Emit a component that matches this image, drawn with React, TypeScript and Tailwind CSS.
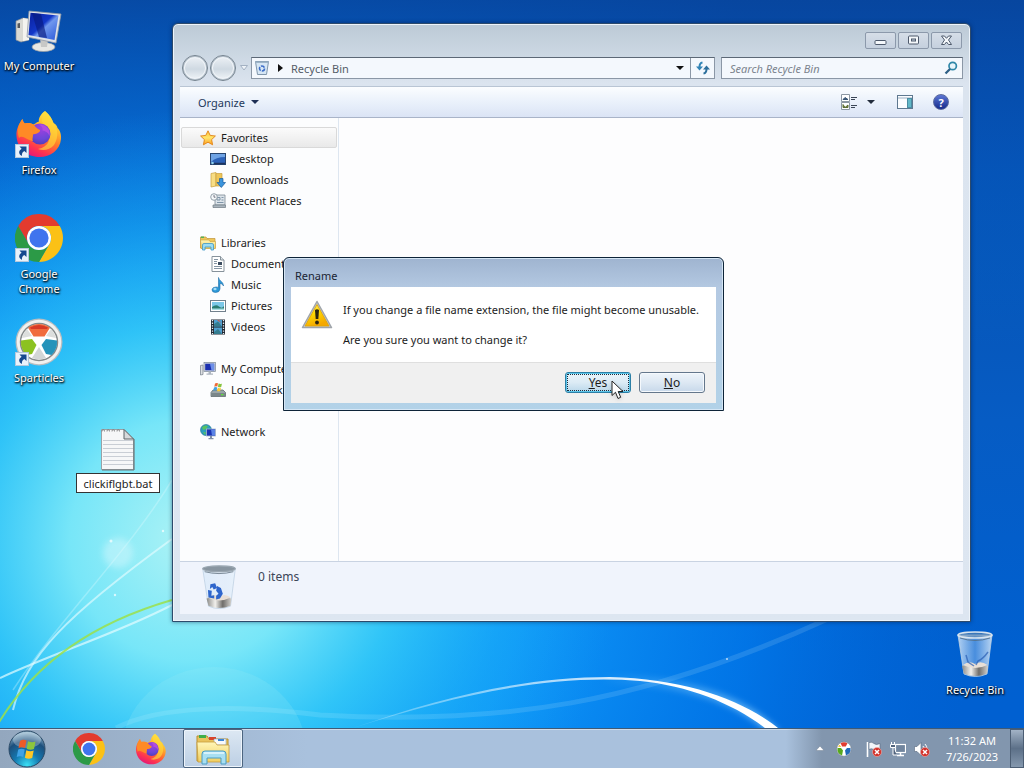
import { useState } from "react";
import type { ReactNode } from "react";

/* Shared gradients used by the icons */
function IconDefs() {
  return (
    <svg className="absolute h-0 w-0" aria-hidden="true">
      <defs>
        <linearGradient id="ffBody" x1="0.8" y1="0" x2="0.3" y2="1">
          <stop offset="0" stopColor="#fff44f" />
          <stop offset="0.3" stopColor="#ffc02e" />
          <stop offset="0.55" stopColor="#ff7a2b" />
          <stop offset="0.8" stopColor="#ff3350" />
          <stop offset="1" stopColor="#e0157c" />
        </linearGradient>
        <radialGradient id="ffGlobe" cx="0.55" cy="0.2" r="0.9">
          <stop offset="0" stopColor="#a23fe0" />
          <stop offset="0.6" stopColor="#6b47d8" />
          <stop offset="1" stopColor="#4a3ab0" />
        </radialGradient>
        <linearGradient id="screen" x1="0" y1="0" x2="1" y2="1">
          <stop offset="0" stopColor="#0a1f9c" />
          <stop offset="0.45" stopColor="#1237c8" />
          <stop offset="0.55" stopColor="#6f97ee" />
          <stop offset="1" stopColor="#2a57d8" />
        </linearGradient>
        <linearGradient id="glass" x1="0" y1="0" x2="1" y2="0">
          <stop offset="0" stopColor="#dcebfa" stopOpacity="0.8" />
          <stop offset="0.5" stopColor="#cfe3f7" stopOpacity="0.35" />
          <stop offset="1" stopColor="#e6f1fb" stopOpacity="0.8" />
        </linearGradient>
        <linearGradient id="metal" x1="0" y1="0" x2="1" y2="0">
          <stop offset="0" stopColor="#8a8a88" />
          <stop offset="0.35" stopColor="#f2f0ec" />
          <stop offset="0.65" stopColor="#6f6d6a" />
          <stop offset="1" stopColor="#d4d2ce" />
        </linearGradient>
        <linearGradient id="warn" x1="0" y1="0" x2="0.4" y2="1">
          <stop offset="0" stopColor="#fff27a" />
          <stop offset="0.5" stopColor="#ffd800" />
          <stop offset="1" stopColor="#f5a800" />
        </linearGradient>
        <linearGradient id="folder" x1="0" y1="0" x2="0" y2="1">
          <stop offset="0" stopColor="#fff6b8" />
          <stop offset="1" stopColor="#f0cf62" />
        </linearGradient>
        <radialGradient id="orb" cx="0.5" cy="0.95" r="0.9">
          <stop offset="0" stopColor="#3be0f5" />
          <stop offset="0.4" stopColor="#1478b0" />
          <stop offset="0.75" stopColor="#1d4f7c" />
          <stop offset="1" stopColor="#8fb4cc" />
        </radialGradient>
        <linearGradient id="star" x1="0" y1="0" x2="0" y2="1">
          <stop offset="0" stopColor="#ffc23a" />
          <stop offset="0.5" stopColor="#ffe56a" />
          <stop offset="1" stopColor="#ff9d1e" />
        </linearGradient>
      </defs>
    </svg>
  );
}

function ChromeIcon({ className }: { className: string }) {
  return (
    <svg viewBox="0 0 48 48" className={className}>
      <path d="M24 12H44.78A24 24 0 0 0 3.2 12L13.6 30A12 12 0 0 1 24 12Z" fill="#e33b2e" />
      <path d="M44.78 12A24 24 0 0 1 24 48L34.4 30A12 12 0 0 0 24 12Z" fill="#fbc116" />
      <path d="M3.2 12A24 24 0 0 0 24 48L34.4 30A12 12 0 0 1 13.6 30Z" fill="#2c9a47" />
      <circle cx="24" cy="24" r="12" fill="#fff" />
      <circle cx="24" cy="24" r="9.6" fill="#3f74ee" />
    </svg>
  );
}

function FirefoxIcon({ className }: { className: string }) {
  return (
    <svg viewBox="0 0 48 48" className={className}>
      <path
        d="M30 1C35 5 37 9 38.5 13C41 14 42 16 42.5 18C45 20 46.5 25 46 29C45 40 35.5 47 24.5 47C12 47 2 38 1.5 26C1 20 3.500 15 5.500 12C6 10.500 7 9.500 7.500 9C7.500 11 8.500 12.500 9.500 13.500C13 12.500 16 13 18.500 14.500C20.500 13.500 22 12 24 11.500C23 9 26 3.500 30 1Z"
        fill="url(#ffBody)"
      />
      <path d="M30 1C35 5 37 9 38.5 13C43 19 44 27 39 35C35 40 28 41 23 39C34 37 37 28 32 20C28 14 24 10 30 1Z" fill="#ffd83a" opacity="0.65" />
      <circle cx="25" cy="24" r="10.5" fill="url(#ffGlobe)" />
      <path d="M5.5 12L7.5 9C8 11 9 12.5 10 13.5C14 12.5 17 13.5 19 15C21 18 24 19.5 25 20C25.5 23 20 24 18 24.5C18 28 17 29 18 31C12 30 7 24 4 28C2 22 3 16 5.5 12Z" fill="#ff8a26" />
      <path d="M24 14.5C30 13.5 36 19 34.5 26C33 22 30 21 27.5 20.5C28 18 27 16 24 14.5Z" fill="#b24ce0" />
    </svg>
  );
}

function SparticlesIcon({ className }: { className: string }) {
  return (
    <svg viewBox="0 0 48 48" className={className}>
      <circle cx="24" cy="24" r="23.5" fill="#b9bdc0" />
      <circle cx="24" cy="24" r="22.2" fill="#f1f1ef" />
      <circle cx="24" cy="24" r="18.5" fill="#fff" stroke="#85898a" strokeWidth="1.5" />
      <path d="M13 9.8A18 18 0 0 1 35 9.800L29.500 18.500H18.500Z" fill="#f06c3e" />
      <path d="M15 9.500A18 18 0 0 1 33 9.500L32 11H16Z" fill="#d83a26" />
      <path d="M6 22.500L17 21L21.500 27L17 36L11.500 37A18 18 0 0 1 6 22.500Z" fill="#8cc220" />
      <path d="M42 22.500L31 21L26.500 27L31 36L36.500 37A18 18 0 0 0 42 22.500Z" fill="#2593ba" />
      <path d="M7 20A18 18 0 0 1 12 11L17 18Z" fill="#dcdedd" />
      <path d="M41 20A18 18 0 0 0 36 11L31 18Z" fill="#dcdedd" />
      <path d="M17 40A18 18 0 0 0 31 40L24 29Z" fill="#d3d6d6" />
    </svg>
  );
}

function ComputerIcon({ className }: { className: string }) {
  return (
    <svg viewBox="0 0 48 48" className={className}>
      <path d="M1 15L8 12L14 13V34L6 36L1 34Z" fill="#d9d9d4" stroke="#8a8e92" strokeWidth="0.7" />
      <path d="M2.5 17.5L5 17V22L2.5 22Z" fill="#55585c" />
      <path d="M8 12L14 13V34L8 35Z" fill="#f4f3ef" />
      <ellipse cx="28.5" cy="41" rx="11.5" ry="4.5" fill="#e8e8e4" stroke="#9c9e9f" strokeWidth="0.7" />
      <path d="M25 32L33 33L32 41H26Z" fill="#c7c8c6" />
      <path d="M14 5L46 8L41 37L12 31Z" fill="#dfe3e8" stroke="#8f98a6" strokeWidth="0.8" />
      <path d="M15.5 6.8L43.5 9.5L39.5 34L13.5 29Z" fill="url(#screen)" />
      <path d="M17 7L26 8L32 32L24 31Z" fill="#071a80" opacity="0.65" />
    </svg>
  );
}

function BinIcon({ className, full }: { className: string; full?: boolean }) {
  return (
    <svg viewBox="0 0 48 48" className={className}>
      <path d="M7 5L13 44Q24 49 36 44L41 5Z" fill="url(#glass)" stroke="#bdd0e2" strokeWidth="0.8" />
      <path d="M11 36Q24 32 37 36L36 43.5Q24 48.5 13 43.5Z" fill="url(#metal)" />
      <path d="M12 35Q18 30 24 34Q30 30 36.5 35Q24 41 12 35Z" fill="#e8dfd6" />
      <ellipse cx="24" cy="5" rx="17" ry="3" fill="#6f8ea8" fillOpacity="0.5" stroke="#d8e4ee" strokeWidth="1.6" />
      {full ? (
        <>
          <ellipse cx="24" cy="5" rx="17" ry="3" fill="#8895a0" stroke="#9aa6b0" strokeWidth="1.2" />
          <path d="M9 8Q24 12 39 8" stroke="#6b7a88" strokeWidth="0.9" fill="none" />
          <g fill="#2f66cc">
            <path d="M15 21L20 20L22 25L18.5 26.5L17 24L14.5 26Z" />
            <path d="M12.5 27L16.5 28L16 33L19 32.5V36L13 35Z" />
            <path d="M22 23L26 25L28 31L25 36L21 37V33L23.500 31L21 28Z" />
          </g>
        </>
      ) : (
        <>
          <path d="M9 8Q24 13 39 8" stroke="#54718a" strokeWidth="0.9" fill="none" />
          <g stroke="#2b5fb4" strokeWidth="1.5" fill="none" opacity="0.7">
            <path d="M15 25L17 32L23 36" />
            <path d="M37 22Q32 29 27 31L25 35" />
          </g>
        </>
      )}
    </svg>
  );
}

function ShortcutArrow() {
  return (
    <svg viewBox="0 0 14 14" className="absolute bottom-0 left-0 size-3.5">
      <rect width="14" height="14" fill="#e9f2fb" />
      <rect x="0.5" y="0.5" width="13" height="13" fill="none" stroke="#b4c8dc" />
      <path d="M4.5 2.5H11.5V9L9.3 7C7.3 8.2 6.7 9.8 7 12C3.4 10 3.2 7 6.6 4.7Z" fill="#16498f" />
    </svg>
  );
}

function NotepadIcon({ className }: { className: string }) {
  return (
    <svg viewBox="0 0 48 48" className={className}>
      <path d="M7.500 6.500H30L39.500 16V46.500H7.500Z" fill="#f6f7f8" stroke="#9aa1a6" />
      <path d="M8 47H40M40 16V47" stroke="#6d7678" strokeWidth="1.2" />
      <path d="M9 17.500H39M9 21.500H39M9 25.500H39M9 29.500H39M9 33.500H39M9 37.500H39M9 41.500H39" stroke="#c9ced5" />
      <path d="M30 6.500V16H39.500Z" fill="#d7dadc" stroke="#5c6468" />
      <path d="M8 8.500a1.300 1.300 0 1 1 2.500 0M13 8.500a1.300 1.300 0 1 1 2.500 0M18 8.500a1.300 1.300 0 1 1 2.500 0M23 8.500a1.300 1.300 0 1 1 2.500 0" stroke="#777" strokeWidth="0.8" fill="none" />
    </svg>
  );
}

function FolderIcon({ className }: { className: string }) {
  return (
    <svg viewBox="0 0 36 32" className={className}>
      <path d="M2 3H12L14 6H33V28H2Z" fill="#e9c35c" stroke="#b98f2f" />
      <rect x="4" y="2" width="7" height="3" fill="#3fae49" />
      <rect x="14" y="4" width="7" height="3" fill="#d8442c" />
      <path d="M19 6H31V12H19Z" fill="#f9fafb" stroke="#8fa9c4" strokeWidth="0.6" />
      <rect x="23" y="6" width="6" height="2" fill="#3d86d6" />
      <path d="M2 9H20L22 12H34V29H3Z" fill="url(#folder)" stroke="#c79d3d" strokeWidth="0.8" />
      <path d="M7 31V21Q7 18 10 18H28Q31 18 31 21V31H26V25H12V31Z" fill="#a8dff2" stroke="#4a9cc4" />
      <path d="M9 20H29" stroke="#e6f8ff" strokeWidth="1.5" />
    </svg>
  );
}

/* Navigation pane icons, all drawn on a 16 grid */
const navIcons: Record<string, ReactNode> = {
  favorites: (
    <path d="M8 0.8L10.2 5.4L15.4 6L11.6 9.6L12.6 14.8L8 12.2L3.4 14.8L4.4 9.6L0.6 6L5.8 5.4Z" fill="url(#star)" stroke="#e08214" strokeWidth="0.9" />
  ),
  desktop: (
    <>
      <rect x="0.5" y="2.5" width="15" height="11" fill="#2c62b8" stroke="#27456f" />
      <path d="M1 3H15V6Q6 6 1 11Z" fill="#6fa3e4" />
      <path d="M1 12.5H15" stroke="#1d3460" strokeWidth="1.5" />
      <circle cx="2.5" cy="12" r="1.3" fill="#8fd0ef" />
    </>
  ),
  downloads: (
    <>
      <path d="M1 1.5L6 0.5V14L1 15Z" fill="#f7dd84" stroke="#c79d3d" strokeWidth="0.7" />
      <path d="M6 1.5H12V14H6Z" fill="#eec659" stroke="#c79d3d" strokeWidth="0.7" />
      <path d="M9.5 6.5H13V10.5H15.5L11.3 15.5L7 10.5H9.5Z" fill="#3b94dc" stroke="#1a5c9c" strokeWidth="0.7" />
    </>
  ),
  recent: (
    <>
      <path d="M5 2H15V12H5Z" fill="#dde4ea" stroke="#7c8994" strokeWidth="0.8" />
      <path d="M7 4.5H10V7H7ZM11.5 4.5H13.5M11.5 7H13.5M7 9.5H13.5" stroke="#7f95a8" fill="none" />
      <path d="M3 12H15.5V14.5H3Z" fill="#aab5be" stroke="#6d7982" strokeWidth="0.7" />
      <circle cx="4" cy="4" r="3.3" fill="#f5f8fa" stroke="#8a97a2" strokeWidth="0.9" />
      <path d="M4 2V4.2H5.5" stroke="#445" strokeWidth="0.7" fill="none" />
    </>
  ),
  libraries: (
    <>
      <path d="M0.5 2H6L7 3.5H15V13H0.5Z" fill="#eec659" stroke="#c09338" strokeWidth="0.7" />
      <path d="M1 1.5H4V3H1Z" fill="#57b155" />
      <path d="M0.5 5H9L10 6.5H15.5V13.5H1Z" fill="url(#folder)" stroke="#c79d3d" strokeWidth="0.6" />
      <path d="M2.5 15V10Q2.5 8.5 4 8.5H12Q13.5 8.5 13.5 10V15H11V12H5V15Z" fill="#9adcf4" stroke="#3f97c6" strokeWidth="0.8" />
    </>
  ),
  documents: (
    <>
      <path d="M2 0.5H10.5L14 4V15.5H2Z" fill="#fff" stroke="#87929b" />
      <path d="M10.5 0.5V4H14" fill="#dde3e8" stroke="#87929b" />
      <path d="M4 3.5H8M4 5.5H7M4 7.5H7M4 10.5H12M4 12.5H12" stroke="#8696a4" />
      <rect x="8" y="6" width="4" height="3" fill="#3c4d60" />
    </>
  ),
  music: (
    <>
      <path d="M8.5 0.5C9 4 13.5 4.5 13.5 9C13 7.5 11.5 6.5 10 6.5V12Q9.5 15.5 5.5 15.5Q2 15.5 2 12.8Q2.5 10 6 10Q7.5 10 8.500 10.500Z" fill="#2e9ad8" stroke="#1b6ca8" strokeWidth="0.6" />
      <ellipse cx="5" cy="12" rx="1.6" ry="1.2" fill="#a5dcf6" />
    </>
  ),
  pictures: (
    <>
      <rect x="0.5" y="2.5" width="15" height="11" fill="#fff" stroke="#71808c" />
      <rect x="2" y="4" width="12" height="8" fill="#7cc8e8" />
      <path d="M2 9Q6 6 9 8.5T14 8V12H2Z" fill="#2a7d72" />
      <path d="M2 10.5H14V12H2Z" fill="#a9dfe4" />
    </>
  ),
  videos: (
    <>
      <rect x="1" y="0.5" width="14" height="15" fill="#1f2630" />
      <rect x="4" y="1" width="8" height="6.5" fill="#4f9fd0" />
      <rect x="4" y="8.5" width="8" height="6.5" fill="#4f9fd0" />
      <path d="M4 5L8 2.5L12 7.5H4ZM4 13L8 10L12 15H4Z" fill="#347c8f" />
      <path d="M7 1L9 1L11 4Z" fill="#d05a4e" />
      <path d="M2.5 1V15M13.5 1V15" stroke="#e6edf3" strokeWidth="1.3" strokeDasharray="1.3 1.3" />
    </>
  ),
  computer: (
    <>
      <path d="M0.5 4.5L3 4V13.5L0.5 14Z" fill="#dcdfe2" stroke="#747d88" strokeWidth="0.7" />
      <rect x="4" y="1.5" width="11.5" height="9" fill="#cfd6e0" stroke="#7a8698" strokeWidth="0.7" />
      <rect x="5.2" y="2.7" width="9" height="6.6" fill="#1a2fb0" />
      <path d="M10 2.7H14.2V9.3H11.5Z" fill="#6d8fe8" />
      <path d="M8.5 10.5H11V12.5H13V13.8H6.5V12.5H8.5Z" fill="#aeb6c0" />
    </>
  ),
  disk: (
    <>
      <path d="M1 10.5L3 8H13L15.5 10.5V14.5H1Z" fill="#9aa5a8" stroke="#525e62" strokeWidth="0.7" />
      <rect x="1.5" y="11" width="13.5" height="3" fill="#7b878a" />
      <rect x="11" y="12" width="2.5" height="1.3" fill="#5fe03c" />
      <path d="M5 1.500Q6.500 0.500 8 1.300L7.300 4.600Q5.800 4 4.300 4.800Z" fill="#ee6a35" />
      <path d="M8.600 1.600Q10.500 2.500 12 1.500L11.200 5Q9.500 5.800 7.900 4.800Z" fill="#86c440" />
      <path d="M4 5.400Q5.600 4.800 7.200 5.400L6.500 8.600Q5 8 3.300 8.700Z" fill="#3fa0e0" />
      <path d="M7.800 5.700Q9.500 6.500 11 5.800L10.200 9Q8.800 9.700 7 8.900Z" fill="#fbcb35" />
    </>
  ),
  network: (
    <>
      <circle cx="6" cy="6" r="5.5" fill="#2c9fbc" stroke="#1f6d96" strokeWidth="0.6" />
      <path d="M2 3Q5 0.5 8 2L6 5L3 6ZM3 8L6 8.5L5 11Z" fill="#59c262" />
      <rect x="6.5" y="5" width="9" height="7" fill="#1a33b4" stroke="#a9b8cc" strokeWidth="0.8" />
      <path d="M11 5.5H15V11.5H12Z" fill="#5a83e6" />
      <path d="M10 12H12V14H13.5V15.3H8.5V14H10Z" fill="#7f8ea6" />
    </>
  ),
};

const navGroups = [
  {
    label: "Favorites",
    icon: "favorites",
    items: [
      { label: "Desktop", icon: "desktop" },
      { label: "Downloads", icon: "downloads" },
      { label: "Recent Places", icon: "recent" },
    ],
  },
  {
    label: "Libraries",
    icon: "libraries",
    items: [
      { label: "Documents", icon: "documents" },
      { label: "Music", icon: "music" },
      { label: "Pictures", icon: "pictures" },
      { label: "Videos", icon: "videos" },
    ],
  },
  {
    label: "My Computer",
    icon: "computer",
    items: [{ label: "Local Disk (C:)", icon: "disk" }],
  },
  { label: "Network", icon: "network", items: [] },
];

function NavIcon({ name }: { name: string }) {
  return (
    <svg viewBox="0 0 16 16" className="size-4 shrink-0">
      {navIcons[name]}
    </svg>
  );
}

function Wallpaper() {
  return (
    <svg viewBox="0 0 1024 768" preserveAspectRatio="none" className="absolute inset-0 h-full w-full" aria-hidden="true">
      <defs>
        <linearGradient id="sky" x1="0" y1="0" x2="0" y2="1">
          <stop offset="0" stopColor="#08459f" />
          <stop offset="0.25" stopColor="#0652b2" />
          <stop offset="0.55" stopColor="#065cc4" />
          <stop offset="0.85" stopColor="#0060d0" />
          <stop offset="1" stopColor="#0060d2" />
        </linearGradient>
        <radialGradient id="glowBlue" gradientUnits="userSpaceOnUse" cx="220" cy="560" r="760">
          <stop offset="0" stopColor="#22bbff" />
          <stop offset="0.4" stopColor="#109cfb" stopOpacity="0.95" />
          <stop offset="0.7" stopColor="#0280f2" stopOpacity="0.65" />
          <stop offset="1" stopColor="#0068dc" stopOpacity="0" />
        </radialGradient>
        <radialGradient id="glowCyan" gradientUnits="userSpaceOnUse" cx="190" cy="540" r="430">
          <stop offset="0" stopColor="#aef3f5" />
          <stop offset="0.28" stopColor="#7ce9f8" stopOpacity="0.95" />
          <stop offset="0.5" stopColor="#36ccf7" stopOpacity="0.8" />
          <stop offset="0.75" stopColor="#1cb0f4" stopOpacity="0.4" />
          <stop offset="1" stopColor="#16a0f4" stopOpacity="0" />
        </radialGradient>
        <linearGradient id="topShade" x1="0" y1="0" x2="0" y2="1">
          <stop offset="0" stopColor="#07469f" stopOpacity="0.85" />
          <stop offset="0.22" stopColor="#0458c0" stopOpacity="0.5" />
          <stop offset="0.45" stopColor="#0468d0" stopOpacity="0" />
        </linearGradient>
        <linearGradient id="arc" x1="0" y1="0" x2="1" y2="0">
          <stop offset="0" stopColor="#fff" stopOpacity="0.2" />
          <stop offset="0.5" stopColor="#fff" stopOpacity="0.7" />
          <stop offset="0.75" stopColor="#fff" />
        </linearGradient>
        <linearGradient id="arcGlow" gradientUnits="userSpaceOnUse" x1="600" y1="0" x2="780" y2="0">
          <stop offset="0" stopColor="#9fdcff" stopOpacity="0" />
          <stop offset="1" stopColor="#9fdcff" stopOpacity="0.7" />
        </linearGradient>
        <filter id="soft" x="-30%" y="-50%" width="160%" height="200%">
          <feGaussianBlur stdDeviation="3" />
        </filter>
      </defs>
      <rect width="1024" height="768" fill="url(#sky)" />
      <rect width="1024" height="768" fill="url(#glowBlue)" />
      <rect width="1024" height="768" fill="url(#topShade)" />
      <rect width="1024" height="768" fill="url(#glowCyan)" />
      <ellipse cx="214" cy="755" rx="93" ry="88" fill="#9ff0f6" opacity="0.18" />
      <circle cx="118" cy="553" r="15" fill="#e6fbff" opacity="0.4" filter="url(#soft)" />
      <g fill="none" stroke="#e4fcff">
        <path d="M13 710C26 656 66 616 172 539" strokeWidth="2" opacity="0.65" />
        <path d="M13 690C60 618 130 550 172 480" strokeWidth="1.5" opacity="0.3" />
        <path d="M0 678C56 652 116 634 172 605" strokeWidth="2" opacity="0.7" />
        <path d="M116 728C160 705 240 705 320 715C500 725 640 705 830 618" strokeWidth="5" opacity="0.13" />
      </g>
      <path d="M-2 724C36 660 96 622 172 600" fill="none" stroke="#9be04a" strokeWidth="2" opacity="0.85" />
      <path d="M600 679C690 680 745 702 776 734" fill="none" stroke="url(#arcGlow)" strokeWidth="9" filter="url(#soft)" />
      <path d="M353 728C450 694 530 677 610 677C690 679 747 702 782 731L769 731C735 704 690 686 640 681C550 674 460 694 353 728Z" fill="url(#arc)" />
      <g fill="#fff" opacity="0.7">
        <circle cx="111" cy="541" r="1.5" />
        <circle cx="163" cy="531" r="1.2" />
        <circle cx="115" cy="595" r="1.2" />
        <circle cx="727" cy="659" r="1" />
      </g>
    </svg>
  );
}

function DesktopIcon({ label, shortcut, children }: { label: string; shortcut?: boolean; children: ReactNode }) {
  return (
    <button className="flex min-h-[104px] w-full flex-col items-center gap-1 text-center text-white [text-shadow:1px_1px_2px_#000,0_1px_2px_#000]">
      <span className="relative size-12">
        {children}
        {shortcut && <ShortcutArrow />}
      </span>
      <span className="whitespace-pre">{label}</span>
    </button>
  );
}

function Caption({ label, children }: { label: string; children: ReactNode }) {
  return (
    <button
      aria-label={label}
      className="flex h-[17px] w-[31px] items-center justify-center rounded-xs border border-[#8c99ab] bg-linear-to-b from-[#d6dee8] to-[#c5d0de]"
    >
      <svg viewBox="0 0 13 11" className="h-[11px] w-[13px]">
        {children}
      </svg>
    </button>
  );
}

function TravelButton({ label }: { label: string }) {
  return (
    <button
      aria-label={label}
      className="size-[26px] rounded-full border border-[#75838f] bg-linear-to-b from-[#eef2f6] via-[#cfd9e2] via-55% to-[#f2f6f9] shadow-[inset_0_0_0_1px_#b4c0cb,inset_0_0_0_2px_#f0f4f8]"
    />
  );
}

function ExplorerWindow() {
  const [query, setQuery] = useState("");

  return (
    <section className="absolute top-[23px] right-[53px] bottom-[106px] left-[172px] flex flex-col rounded-t-md border border-[#2d4a6b] bg-linear-to-b from-[#bccad6] via-[#dbe4ef] via-10% to-[#dde6f1] px-[7px] pb-[7px] shadow-[inset_0_0_0_1px_#eef4fa,0_0_4px_rgba(0,20,60,0.5)]">
      <div className="flex h-8 items-start justify-end gap-0.5 pt-2 pr-px">
        <Caption label="Minimize">
          <rect x="1" y="5.5" width="11" height="4" rx="1" fill="#f5f8fb" stroke="#4d596b" />
        </Caption>
        <Caption label="Maximize">
          <rect x="1.5" y="1" width="10" height="8" rx="1" fill="#f5f8fb" stroke="#4d596b" />
          <rect x="4.5" y="4" width="4" height="2" fill="#c8d2df" stroke="#4d596b" />
        </Caption>
        <Caption label="Close">
          <path d="M1.5 1H4.5L6.5 3.3L8.5 1H11.5L8.5 5L11.5 9.5H8.5L6.5 7L4.5 9.5H1.5L4.5 5Z" fill="#f5f8fb" stroke="#4d596b" />
        </Caption>
      </div>

      {/* Address row */}
      <div className="flex h-[30px] items-center pb-1.5">
        <div className="flex w-[71px] shrink-0 items-center gap-0.5 pl-0.5">
          <TravelButton label="Back" />
          <TravelButton label="Forward" />
          <svg viewBox="0 0 8 6" className="ml-0.5 h-1.5 w-2">
            <path d="M0.5 0.5H7.5L4 5Z" fill="#eef3f8" stroke="#a3b1c2" />
          </svg>
        </div>
        <div className="flex h-[22px] flex-1 items-stretch border border-[#8b97a6] border-t-[#5c6876] bg-[#f4f8fd]">
          <button className="flex flex-1 items-center gap-2 pl-0.5 text-[#555d68]">
            <svg viewBox="0 0 16 16" className="size-4">
              <path d="M1.5 1.5H14.5L12.5 14.5H3.5Z" fill="#d6e6f4" stroke="#8096ac" />
              <path d="M1.5 1.5H14.5V3H1.5Z" fill="#9db4c8" />
              <circle cx="8" cy="8.5" r="2.5" fill="none" stroke="#3b6cc8" strokeWidth="1.6" strokeDasharray="4 1.2" />
            </svg>
            <svg viewBox="0 0 5 8" className="h-2 w-[5px]">
              <path d="M0 0L5 4L0 8Z" fill="#111" />
            </svg>
            <span>Recycle Bin</span>
          </button>
          <button aria-label="Previous locations" className="flex w-5 items-center justify-center">
            <svg viewBox="0 0 8 4" className="h-1 w-2">
              <path d="M0 0H8L4 4Z" fill="#111" />
            </svg>
          </button>
          <button aria-label="Refresh" className="flex w-6 items-center justify-center border-l border-[#8b97a6]">
            <svg viewBox="0 0 16 14" className="h-3.5 w-4">
              <path d="M7.5 1.5Q4.5 2 4.5 6" fill="none" stroke="#3284b6" strokeWidth="2" />
              <path d="M1 5.5H8L4.5 9.5Z" fill="#3284b6" />
              <path d="M8.5 12.5Q11.5 12 11.5 8" fill="none" stroke="#2c6f9c" strokeWidth="2" />
              <path d="M8 8.5H15L11.5 4.5Z" fill="#2c6f9c" />
            </svg>
          </button>
        </div>
        <div className="ml-1.5 flex h-[22px] w-[242px] items-center border border-[#8b97a6] border-t-[#5c6876] bg-[#f4f8fd] pr-1 pl-2">
          <input
            type="text"
            aria-label="Search Recycle Bin"
            placeholder="Search Recycle Bin"
            value={query}
            onChange={(e) => setQuery(e.target.value)}
            className="min-w-0 flex-1 bg-transparent outline-none placeholder:text-[#7b838d] placeholder:italic"
          />
          <svg viewBox="0 0 14 14" className="size-3.5">
            <circle cx="8.7" cy="5" r="3.7" fill="#e8f5fb" stroke="#2f87a8" strokeWidth="1.7" />
            <path d="M6 8L1.5 12.5" stroke="#2e5f86" strokeWidth="2.3" />
          </svg>
        </div>
      </div>

      {/* Command bar */}
      <div className="flex h-8 shrink-0 items-center justify-between border-t border-b border-t-[#b9c5d4] border-b-[#a9b4c8] bg-linear-to-b from-[#fbfdff] via-[#eaf1fb] via-50% to-[#dbe4f5] pr-3.5 pl-[18px]">
        <button className="flex items-center gap-1.5 text-[#1e395b]">
          Organize
          <svg viewBox="0 0 8 4" className="h-1 w-2">
            <path d="M0 0H8L4 4Z" fill="#1e2f55" />
          </svg>
        </button>
        <div className="flex items-center">
          <button aria-label="Change your view" className="flex items-center gap-2.5">
            <svg viewBox="0 0 16 16" className="size-4">
              <path d="M0.5 0.5H8.5V7.5H0.5ZM0.5 8.5H8.5V15.5H0.5Z" fill="#fff" stroke="#8b96a2" />
              <path d="M2 5.5L4 3.5L7 5.5Z" fill="#3b5776" stroke="#3b5776" />
              <path d="M2 10.5L4 13.5L7 11V13.5H2Z" fill="#7b8a3a" stroke="#5c6d35" />
              <path d="M10 3.500H16M10 5.500H14M10 11.500H16M10 13.500H14" stroke="#3b4656" />
            </svg>
            <svg viewBox="0 0 8 4" className="h-1 w-2">
              <path d="M0 0H8L4 4Z" fill="#222c3c" />
            </svg>
          </button>
          <button aria-label="Show the preview pane" className="ml-[22px]">
            <svg viewBox="0 0 16 14" className="h-3.5 w-4">
              <rect x="0.5" y="0.5" width="15" height="13" fill="#fbfdff" stroke="#5e7890" />
              <path d="M1 3H15" stroke="#9cb0c4" />
              <rect x="10.5" y="3.5" width="4" height="9" fill="#62b8c8" stroke="#4b8da3" />
            </svg>
          </button>
          <button
            aria-label="Get help"
            className="ml-5 flex size-4 items-center justify-center rounded-full border border-[#5a6a9c] bg-linear-to-b from-[#5d76d4] to-[#182b8c] leading-none font-bold text-white"
          >
            ?
          </button>
        </div>
      </div>

      <div className="flex min-h-0 flex-1">
        <nav className="w-[159px] shrink-0 overflow-hidden border-r border-[#dde6f0] bg-[#fcfdfe] pt-[9px]">
          <ul className="flex flex-col gap-[21px] px-px">
            {navGroups.map((group, index) => (
              <li key={group.label}>
                <a
                  href="#"
                  className={
                    index === 0
                      ? "flex h-[21px] items-center gap-[5px] rounded-xs border border-[#d9d9d9] bg-linear-to-b from-[#fbfbfb] to-[#e9e9e9] pl-[18px] whitespace-nowrap"
                      : "flex h-[21px] items-center gap-[5px] border border-transparent pl-[18px] whitespace-nowrap"
                  }
                >
                  <NavIcon name={group.icon} />
                  {group.label}
                </a>
                {group.items.map((item) => (
                  <a key={item.label} href="#" className="flex h-[21px] items-center gap-[5px] pl-[29px] whitespace-nowrap">
                    <NavIcon name={item.icon} />
                    {item.label}
                  </a>
                ))}
              </li>
            ))}
          </ul>
        </nav>
        <div className="flex-1 bg-[#fdfdfe]" />
      </div>

      {/* Details pane */}
      <div className="flex h-[53px] shrink-0 items-start gap-4 border-t border-[#c9d3e2] bg-[#f0f4fc] pl-4">
        <BinIcon full className="mt-0.5 size-[46px]" />
        <span className="pt-[7px] text-[12px] text-[#3c4658]">0 items</span>
      </div>
    </section>
  );
}

function RenameDialog() {
  return (
    <div
      role="dialog"
      aria-labelledby="rename-title"
      className="absolute top-[257px] left-[283px] w-[441px] rounded-t-md border border-[#0e2438] bg-linear-to-b from-[#9fb4d0] via-[#b4c9e2] via-20% to-[#b2d2e8] px-[7px] pb-[7px] shadow-[inset_0_0_0_1px_#d5e6f5]"
    >
      <h2 id="rename-title" className="flex h-[29px] items-center pt-1.5 pl-1 text-[#1a2433]">
        Rename
      </h2>
      <div className="flex gap-2.5 bg-white px-2.5 py-[15px]">
        <svg viewBox="0 0 32 30" className="-mt-0.5 h-[30px] w-8 shrink-0">
          <path d="M16 1.5L30.5 27.5H1.5Z" fill="#c9cdd2" stroke="#a0a5ab" strokeWidth="1.5" strokeLinejoin="round" />
          <path d="M16 4.5L28 26H4Z" fill="url(#warn)" stroke="#e0a300" strokeWidth="0.8" strokeLinejoin="round" />
          <path d="M14 10Q16 8.5 18 10L17.3 19H14.7Z" fill="#2b2410" />
          <circle cx="16" cy="22.5" r="1.9" fill="#2b2410" />
        </svg>
        <div className="flex flex-col gap-[15px] whitespace-nowrap">
          <p>If you change a file name extension, the file might become unusable.</p>
          <p>Are you sure you want to change it?</p>
        </div>
      </div>
      <div className="flex justify-end gap-2 border-t border-[#dfdfdf] bg-[#f0f0f0] px-[11px] pt-[9px] pb-2.5">
        <button className="relative h-[21px] w-[66px] rounded-[3px] border border-[#2c7fa6] bg-linear-to-b from-[#eaf4fa] via-[#dcebf5] via-50% to-[#b9d7ea] text-[12px] shadow-[inset_0_0_0_1px_#5cc6ea]">
          <span className="absolute inset-px border border-dotted border-[#1c2c3c]" />
          <span className="underline">Y</span>es
        </button>
        <button className="h-[21px] w-[66px] rounded-[3px] border border-[#64778c] bg-linear-to-b from-[#eef4fa] via-[#dde8f3] via-50% to-[#c7d8ea] text-[12px] shadow-[inset_0_0_0_1px_#f5f9fd]">
          <span className="underline">N</span>o
        </button>
      </div>
    </div>
  );
}

function SparticlesTray() {
  return (
    <svg viewBox="0 0 16 16" className="ml-3 size-4">
      <circle cx="8" cy="8" r="7.3" fill="#fff" stroke="#7d8a98" strokeWidth="0.7" />
      <path d="M4.5 2.2A7 7 0 0 1 11.5 2.2L9.8 5.5H6.2Z" fill="#e23c30" />
      <path d="M1.5 7L5 7L7 9.5L6 14.5A7 7 0 0 1 1.5 7Z" fill="#57a81e" />
      <path d="M14.5 7L11 7L9 9.5L10 14.5A7 7 0 0 0 14.5 7Z" fill="#2069b8" />
      <path d="M2 5.8L3.3 3.8L5.5 6Z" fill="#f3c42c" />
    </svg>
  );
}

function Taskbar() {
  return (
    <footer className="relative flex h-10 shrink-0 items-stretch justify-between border-t border-[#3f5a76] bg-linear-to-r from-[#93a7be] via-[#a9c1dd] via-30% to-[#a9c1dd] shadow-[inset_0_1px_0_#cfdceb]">
      <div className="flex items-center">
        <button aria-label="Start" className="ml-2 size-[38px]">
          <svg viewBox="0 0 38 38">
            <circle cx="19" cy="19" r="18" fill="url(#orb)" stroke="#2b4a66" />
            <ellipse cx="19" cy="10" rx="14" ry="8" fill="#fff" opacity="0.28" />
            <path d="M12 11Q15 9 18.5 10.5L17 18Q14 16.5 10.5 18Z" fill="#ee5b28" />
            <path d="M20 11.2Q24 13 27.5 11.5L26 19Q22.5 20.5 18.7 18.8Z" fill="#8cc63c" />
            <path d="M10.2 19.5Q13.5 18 16.7 19.5L15.2 27Q12 25.5 8.7 27Z" fill="#3ea2e6" />
            <path d="M18.3 20.2Q22 22 25.7 20.5L24.2 28Q20.5 29.5 16.9 27.8Z" fill="#ffc726" />
          </svg>
        </button>
        <button aria-label="Google Chrome" className="ml-[27px]">
          <ChromeIcon className="size-8" />
        </button>
        <button aria-label="Firefox" className="ml-[30px]">
          <FirefoxIcon className="size-8" />
        </button>
        <button
          aria-label="Windows Explorer"
          className="ml-4 flex h-[39px] w-[60px] items-center justify-center rounded-xs border border-[#4c6580] bg-linear-to-b from-[#dde8f3] to-[#bccfe4] shadow-[inset_0_0_0_1px_#edf4fb]"
        >
          <FolderIcon className="h-8 w-9" />
        </button>
      </div>
      <div className="flex items-center bg-linear-to-r from-transparent to-[#8296ae] to-15% pl-[30px]">
        <button aria-label="Show hidden icons" className="w-2">
          <svg viewBox="0 0 8 5" className="h-[5px] w-2">
            <path d="M0 4.5L4 0L8 4.5Z" fill="#fff" stroke="#5e6f84" strokeWidth="0.4" />
          </svg>
        </button>
        <SparticlesTray />
        <svg viewBox="0 0 16 16" className="ml-3.5 size-4">
          <path d="M1.5 1V16" stroke="#fff" strokeWidth="1.6" />
          <path d="M3 1.5Q6 0.5 8 2.5T14 2.5V9Q11 10 8 8.5T3 8.5Z" fill="#f2f6fa" stroke="#56667c" strokeWidth="0.6" />
          <circle cx="11" cy="11" r="4.5" fill="#d22f27" stroke="#f4b2ae" strokeWidth="0.6" />
          <path d="M9 9L13 13M13 9L9 13" stroke="#fff" strokeWidth="1.5" />
        </svg>
        <svg viewBox="0 0 16 16" className="ml-2 size-4">
          <rect x="5.5" y="3.5" width="10" height="8" fill="#71859e" stroke="#fff" strokeWidth="1.2" />
          <path d="M7 14.5H14M10.5 12V14.5" stroke="#fff" strokeWidth="1.5" />
          <path d="M0.5 3.5H5.5V6.5H0.5ZM1.5 1V3.5M4.5 1V3.5M3 6.5V14H7" fill="#52657e" stroke="#fff" />
        </svg>
        <svg viewBox="0 0 16 16" className="ml-2 size-4">
          <path d="M0.5 5.5H3L7 1.5V14.5L3 10.5H0.5Z" fill="#fff" stroke="#56667c" strokeWidth="0.6" />
          <path d="M9 5Q10 6.5 10 8M11 3Q13 5 13 8" stroke="#fff" fill="none" />
          <circle cx="11" cy="11" r="4.5" fill="#d22f27" stroke="#f4b2ae" strokeWidth="0.6" />
          <path d="M9 9L13 13M13 9L9 13" stroke="#fff" strokeWidth="1.5" />
        </svg>
        <time dateTime="2023-07-26T11:32" className="w-20 pl-1 text-center leading-4 text-white">
          11:32 AM
          <br />
          7/26/2023
        </time>
        <button
          aria-label="Show desktop"
          className="h-full w-3.5 border border-[#4c5e74] bg-linear-to-b from-[#a3b3c6] via-[#5c7088] to-[#8598ae]"
        />
      </div>
    </footer>
  );
}

export default function App() {
  const [fileName, setFileName] = useState("clickiflgbt.bat");

  return (
    <div className="relative flex h-screen flex-col overflow-hidden bg-[#0a62c8] font-['Noto_Sans','Open_Sans',sans-serif] text-[11px] leading-[15px] text-[#1c1c1c]">
      <IconDefs />
      <Wallpaper />

      <main className="relative min-h-0 flex-1">
        <div className="flex w-[78px] flex-col pt-1.5">
          <DesktopIcon label="My Computer">
            <ComputerIcon className="size-12" />
          </DesktopIcon>
          <DesktopIcon label="Firefox" shortcut>
            <FirefoxIcon className="size-12" />
          </DesktopIcon>
          <DesktopIcon label={"Google\nChrome"} shortcut>
            <ChromeIcon className="size-12" />
          </DesktopIcon>
          <DesktopIcon label="Sparticles" shortcut>
            <SparticlesIcon className="size-12" />
          </DesktopIcon>
        </div>

        {/* File being renamed */}
        <div className="absolute top-[423px] left-[76px] flex w-[84px] flex-col items-center gap-0.5">
          <NotepadIcon className="size-12" />
          <input
            type="text"
            aria-label="File name"
            value={fileName}
            onChange={(e) => setFileName(e.target.value)}
            className="h-5 w-full border border-[#333] bg-white text-center outline-none"
          />
        </div>

        <div className="absolute right-0 bottom-[-6px] w-[98px]">
          <DesktopIcon label="Recycle Bin">
            <BinIcon className="size-12" />
          </DesktopIcon>
        </div>

        <ExplorerWindow />
        <RenameDialog />

        <svg viewBox="0 0 13 20" className="pointer-events-none absolute top-[380px] left-[611px] h-5 w-[13px] drop-shadow-sm">
          <path d="M1 1V15.5L4.5 12.3L7 18.5L9.7 17.3L7.2 11.5H12Z" fill="#fff" stroke="#222" />
        </svg>
      </main>

      <Taskbar />
    </div>
  );
}
